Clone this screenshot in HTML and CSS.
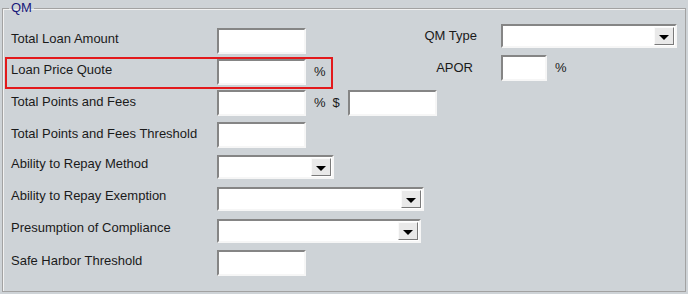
FILE: index.html
```html
<!DOCTYPE html>
<html>
    <head>
        <title>QM</title>
        <link rel="stylesheet" href="styles.css">
    </head>
    <body>
        <fieldset class="qm_box">
            <legend>QM</legend>
            <div class="qm_cols">
                <div class="col_left">
                    <div class="row">
                        <span class="lbl">Total Loan Amount</span>
                        <input type="text" class="txt">
                    </div>
                    <div class="row highlight">
                        <span class="lbl">Loan Price Quote</span>
                        <input type="text" class="txt">
                        <span class="unit">%</span>
                    </div>
                    <div class="row">
                        <span class="lbl">Total Points and Fees</span>
                        <input type="text" class="txt">
                        <span class="unit">%</span>
                        <span class="unit dollar">$</span>
                        <input type="text" class="txt">
                    </div>
                    <div class="row">
                        <span class="lbl">Total Points and Fees Threshold</span>
                        <input type="text" class="txt">
                    </div>
                    <div class="row row_combo">
                        <span class="lbl">Ability to Repay Method</span>
                        <div class="combo combo_s"><span class="combo_btn"></span></div>
                    </div>
                    <div class="row row_combo">
                        <span class="lbl">Ability to Repay Exemption</span>
                        <div class="combo combo_l"><span class="combo_btn"></span></div>
                    </div>
                    <div class="row row_combo">
                        <span class="lbl">Presumption of Compliance</span>
                        <div class="combo combo_m"><span class="combo_btn"></span></div>
                    </div>
                    <div class="row">
                        <span class="lbl lbl_last">Safe Harbor Threshold</span>
                        <input type="text" class="txt">
                    </div>
                </div>
                <div class="col_right">
                    <div class="row">
                        <span class="lbl_r">QM Type</span>
                        <div class="combo combo_qm"><span class="combo_btn"></span></div>
                    </div>
                    <div class="row">
                        <span class="lbl_r apor">APOR</span>
                        <input type="text" class="txt txt_small">
                        <span class="unit">%</span>
                    </div>
                </div>
            </div>
        </fieldset>
    </body>
</html>
```

FILE: styles.css
```css
html, body {
    margin: 0;
    background: #ced3d7;
    font-family: "Liberation Sans", Arial, sans-serif;
    font-size: 13px;
    color: #1a1a1a;
}
.qm_box {
    box-sizing: border-box;
    height: 292px;
    margin: 0 2px;
    padding: 0;
    border: 1px solid #a2a2a2;
    box-shadow: inset 1px 1px 0 #f2f2f2;
}
.qm_box legend {
    margin-left: 6px;
    padding: 0 2px;
    line-height: 16px;
    color: #18187a;
}
.qm_cols {
    display: flex;
    padding: 9px 0 0 8px;
}
.col_left {
    flex: none;
    width: 410px;
}
.col_right {
    margin-top: -5px;
}
.row {
    display: flex;
    align-items: center;
    height: 32px;
}
.row > * {
    flex: none;
}
.col_left .row:nth-child(1),
.col_left .row:nth-child(2) {
    height: 31px;
}
.lbl {
    width: 206px;
    margin-bottom: 4px;
}
.row_combo .lbl {
    margin-bottom: 8px;
}
.lbl.lbl_last {
    margin-bottom: 6px;
}
.lbl_r {
    width: 56px;
    padding-right: 24px;
    text-align: right;
    margin-bottom: 1px;
}
.lbl_r.apor {
    width: 52px;
    padding-right: 28px;
}
.highlight {
    position: relative;
}
.highlight:before {
    content: "";
    position: absolute;
    left: -6px;
    top: 1px;
    bottom: -2px;
    width: 324px;
    border: 2px solid #e3191b;
}
.txt {
    box-sizing: border-box;
    width: 89px;
    height: 26px;
    margin: 0;
    padding: 0;
    background: #fff;
    border: 2px solid;
    border-color: #858585 #f6f6f6 #f6f6f6 #858585;
    outline: none;
}
.txt_small {
    width: 46px;
}
.unit {
    margin-left: 8px;
    margin-bottom: 1px;
}
.dollar {
    margin-left: 7px;
    margin-right: 8px;
}
.combo {
    box-sizing: border-box;
    display: flex;
    justify-content: flex-end;
    height: 24px;
    padding: 1px;
    background: #fff;
    border: 2px solid;
    border-color: #858585 #f6f6f6 #f6f6f6 #858585;
}
.combo_s { width: 117px; }
.combo_l { width: 207px; }
.combo_m { width: 204px; }
.combo_qm { width: 176px; }
.combo_btn {
    box-sizing: border-box;
    display: flex;
    align-items: center;
    justify-content: center;
    width: 20px;
    background: #e9e9e9;
    border: 1px solid;
    border-color: #fafafa #7a7a7a #7a7a7a #fafafa;
}
.combo_btn:after {
    content: "";
    border-left: 5px solid transparent;
    border-right: 5px solid transparent;
    border-top: 5px solid #000;
    margin-top: 2px;
}
```
